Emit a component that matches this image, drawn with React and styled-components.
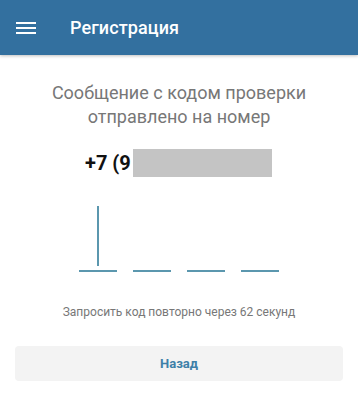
import React from "react";
import styled, { createGlobalStyle } from "styled-components";

const Global = createGlobalStyle`
  html, body { margin: 0; padding: 0; background: #fff; }
  body { font-family: Roboto, "Noto Sans", Arial, sans-serif; }
`;

const Page = styled.div`
  width: 358px;
  height: 397px;
  display: flex;
  flex-direction: column;
  overflow: hidden;
`;

const Header = styled.header`
  height: 55px;
  flex: none;
  background: #33709f;
  display: flex;
  align-items: center;
  padding-left: 16px;
  gap: 34px;
  box-shadow: 0 1px 3px rgba(0, 0, 0, 0.25);
  position: relative;
  z-index: 1;
`;

const Burger = styled.div`
  width: 20px;
  height: 12px;
  display: flex;
  flex-direction: column;
  justify-content: space-between;
  & > span {
    display: block;
    height: 2px;
    background: #fff;
  }
`;

const Title = styled.h1`
  margin: 0;
  color: #fff;
  font-size: 18px;
  font-weight: 500;
  letter-spacing: 0.1px;
`;

const Body = styled.main`
  display: flex;
  flex-direction: column;
  align-items: center;
  padding: 26px 14px 0;
`;

const Message = styled.p`
  margin: 0;
  text-align: center;
  color: #777;
  font-size: 18px;
  line-height: 24px;
`;

const PhoneRow = styled.div`
  margin-top: 20px;
  display: flex;
  align-items: center;
  align-self: flex-start;
  margin-left: 71px;
`;

const Phone = styled.span`
  font-size: 20px;
  font-weight: 700;
  color: #111;
  line-height: 28px;
`;

const Mask = styled.span`
  width: 139px;
  height: 28px;
  background: #c4c4c4;
  margin-left: 2px;
`;

const Code = styled.div`
  margin-top: 29px;
  display: flex;
  gap: 16px;
`;

const Cell = styled.div`
  width: 38px;
  height: 66px;
  display: flex;
  justify-content: center;
  align-items: flex-end;
  border-bottom: 2px solid #5b97ae;
  box-sizing: border-box;
  padding-bottom: 4px;
`;

const Cursor = styled.span`
  width: 2px;
  height: 60px;
  background: #5b97ae;
`;

const Resend = styled.p`
  margin: 33px 0 0;
  color: #777;
  font-size: 12px;
  line-height: 14px;
  text-align: center;
`;

const Button = styled.button`
  margin-top: 27px;
  width: 328px;
  height: 35px;
  border: none;
  border-radius: 4px;
  background: #f3f3f3;
  color: #3e80a8;
  font-family: inherit;
  font-size: 13px;
  font-weight: 700;
  cursor: pointer;
`;

export default function App() {
  return (
    <Page>
      <Global />
      <Header>
        <Burger>
          <span />
          <span />
          <span />
        </Burger>
        <Title>Регистрация</Title>
      </Header>
      <Body>
        <Message>
          Сообщение с кодом проверки
          <br />
          отправлено на номер
        </Message>
        <PhoneRow>
          <Phone>+7 (9</Phone>
          <Mask />
        </PhoneRow>
        <Code>
          <Cell>
            <Cursor />
          </Cell>
          <Cell />
          <Cell />
          <Cell />
        </Code>
        <Resend>Запросить код повторно через 62 секунд</Resend>
        <Button>Назад</Button>
      </Body>
    </Page>
  );
}
